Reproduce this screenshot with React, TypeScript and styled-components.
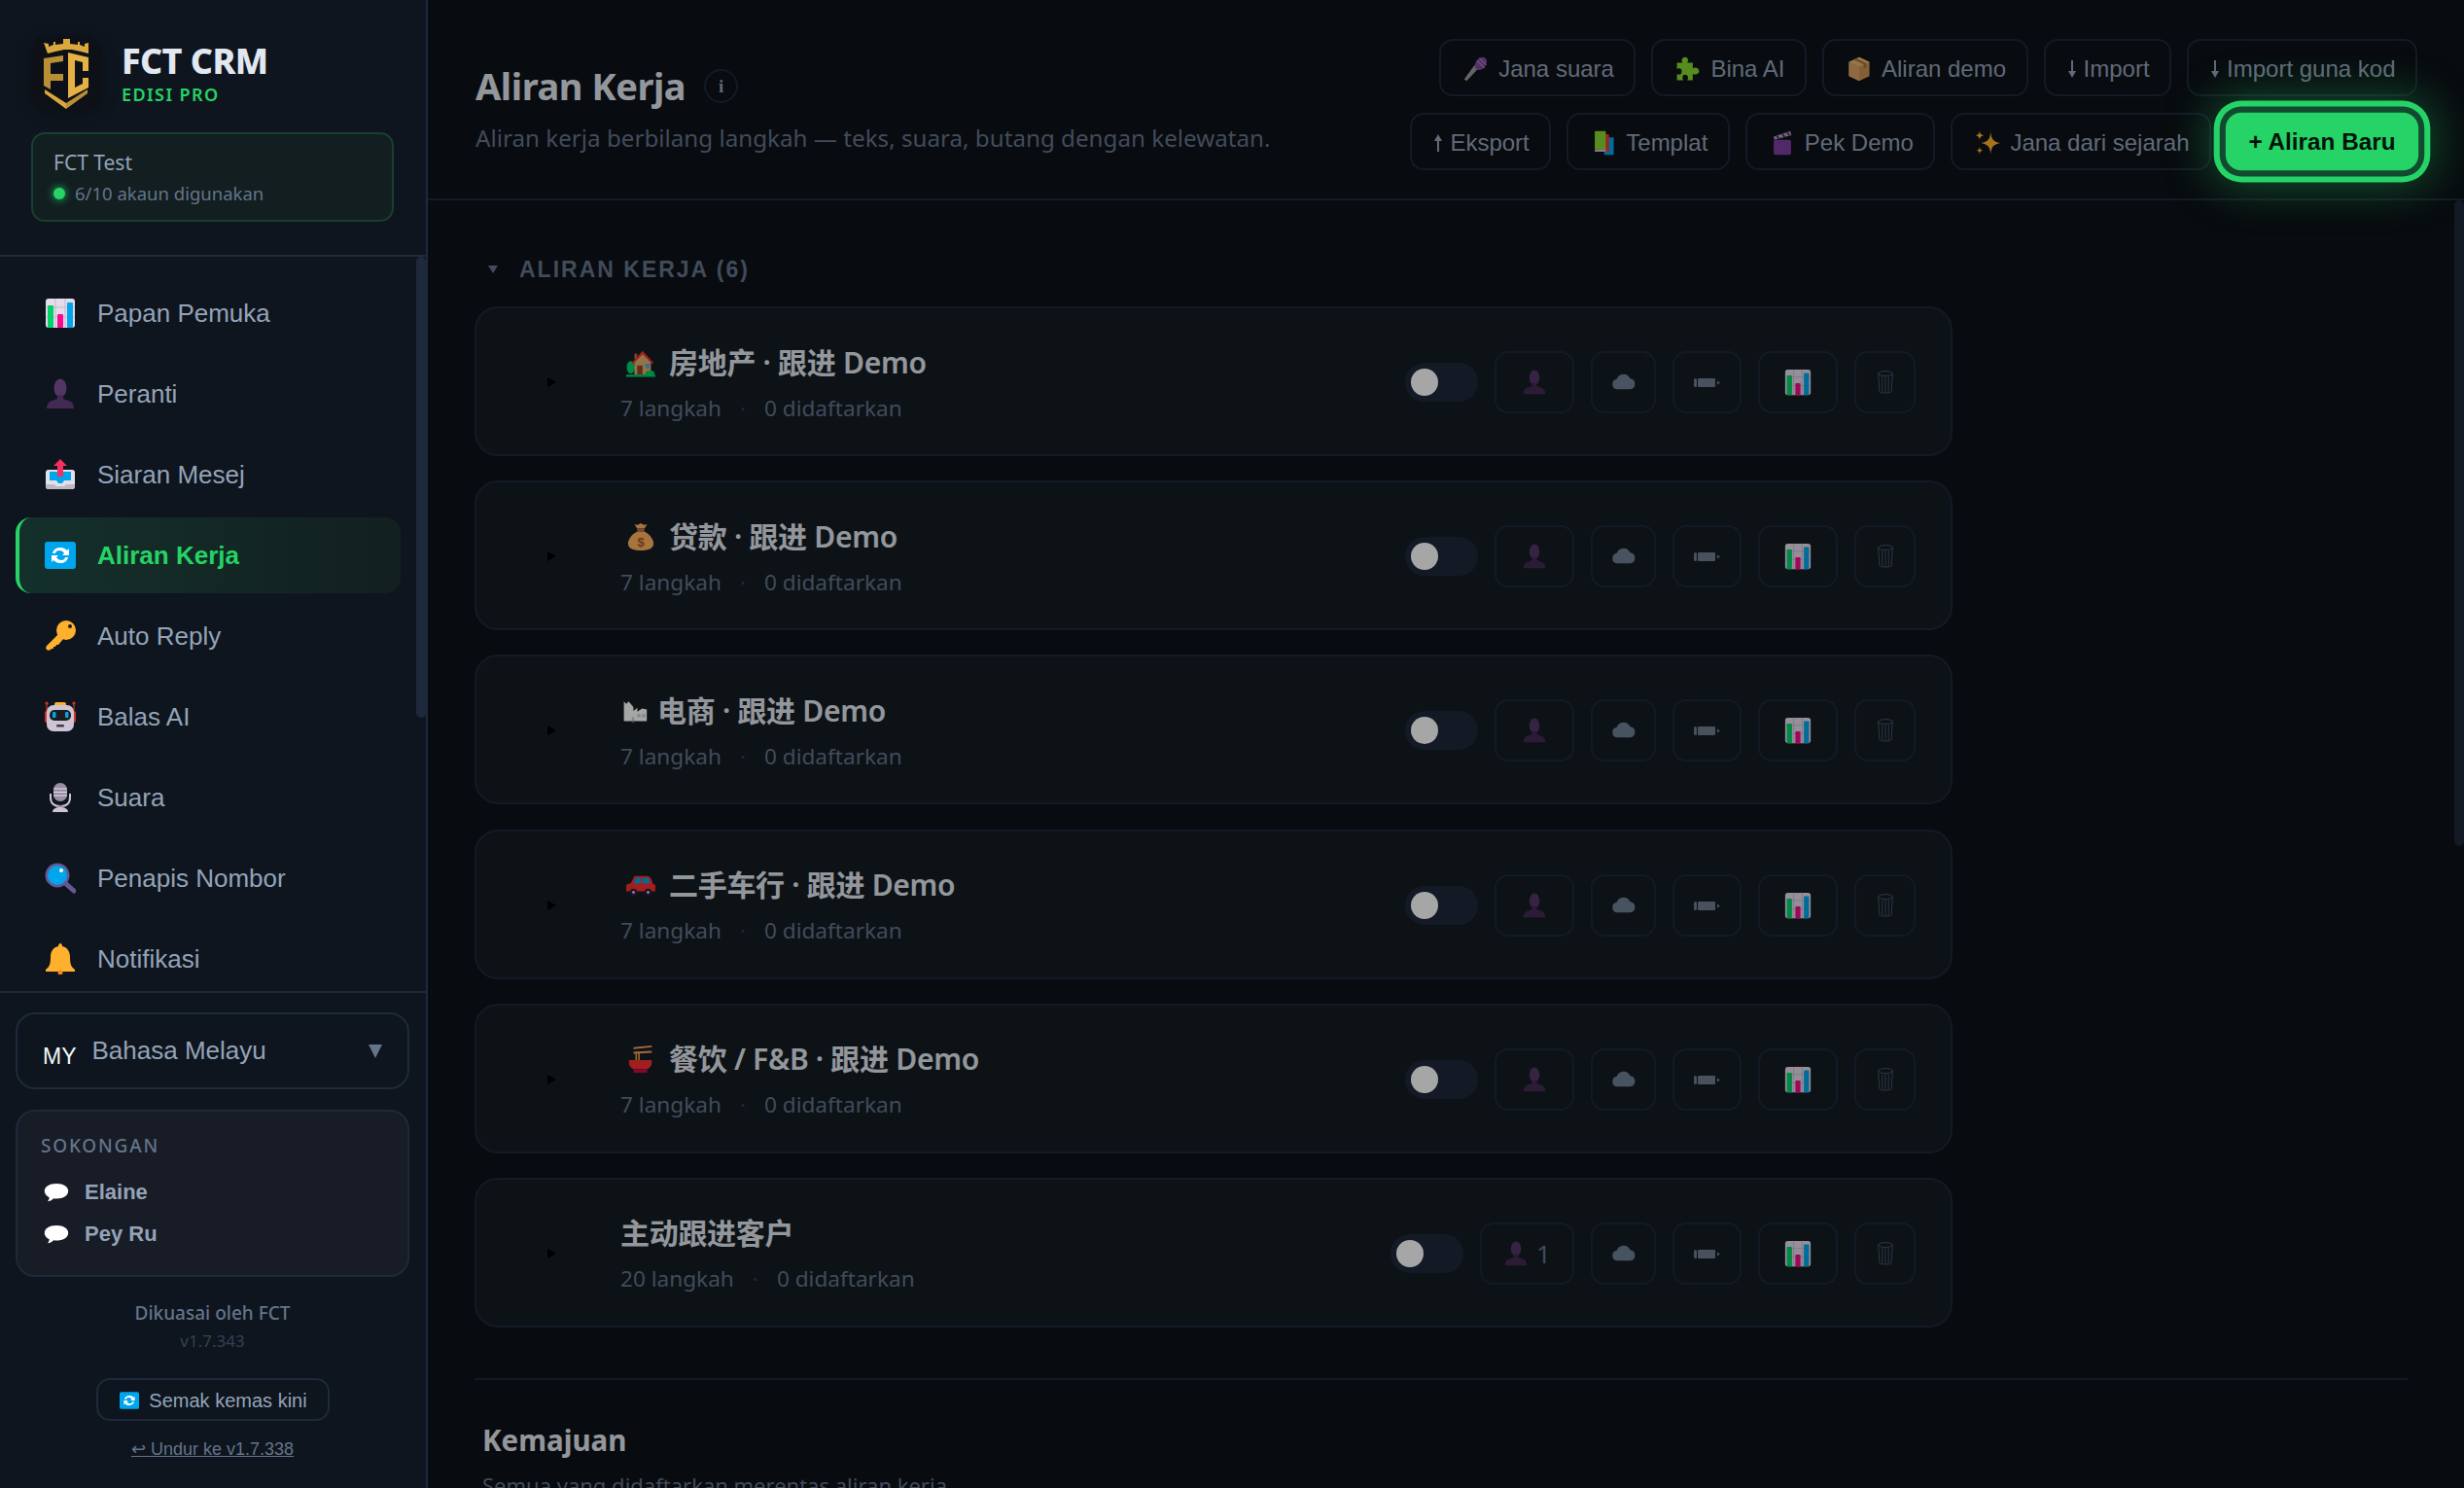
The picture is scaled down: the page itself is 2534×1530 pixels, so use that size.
import React from 'react';
import styled, { createGlobalStyle } from 'styled-components';

const SEGOE = `"Noto Sans", "Noto Sans CJK SC", sans-serif`;
const ARIAL = `"Liberation Sans", "Noto Sans CJK SC", sans-serif`;

const Global = createGlobalStyle`
  html, body { margin: 0; padding: 0; height: 100%; background: #0d1117; overflow: hidden; }
  * { box-sizing: border-box; }
`;

type EmojiName = 'chart' | 'person' | 'outbox' | 'refresh' | 'key' | 'robot' | 'mic' | 'search' | 'bell' | 'bubble'
  | 'handmic' | 'puzzle' | 'box' | 'books' | 'clapper' | 'sparkles' | 'house' | 'bag' | 'factory' | 'car' | 'noodles'
  | 'cloud' | 'pen' | 'trash';

const Art: Record<EmojiName, React.ReactNode> = {
  chart: <>
    <rect x="1" y="1" width="30" height="30" rx="3" fill="#e4dcea" />
    <path d="M11 1v30M21 1v30M1 10h30M1 20h30" stroke="#c3b8cf" strokeWidth="1" />
    <rect x="3" y="8" width="6" height="23" rx="1" fill="#00d26a" />
    <rect x="13" y="17" width="6" height="14" rx="1" fill="#f70a8d" />
    <rect x="23" y="5" width="6" height="26" rx="1" fill="#00a6ed" />
  </>,
  person: <>
    <ellipse cx="16" cy="10" rx="6.500" ry="9.500" fill="#533566" />
    <path d="M13 17h6v4l7 2.500c2 1 4 4 4 7.500H2c0-3.500 2-6.500 4-7.500l7-2.500z" fill="#432a52" />
  </>,
  outbox: <>
    <path d="M4 11h24a3 3 0 0 1 3 3v14a3 3 0 0 1-3 3H4a3 3 0 0 1-3-3V14a3 3 0 0 1 3-3z" fill="#e4e0ea" />
    <path d="M5 13h22v9h-7l-2 3h-4l-2-3H5z" fill="#00a6ed" />
    <path d="M1 26h9l2 2h8l2-2h9v2a3 3 0 0 1-3 3H4a3 3 0 0 1-3-3z" fill="#bdb8c4" />
    <path d="M16 0l7 7h-4v11h-6V7H9z" fill="#f92f60" />
  </>,
  refresh: <>
    <rect x="0" y="2" width="32" height="28" rx="3" fill="#00a6ed" />
    <path d="M8 14c1-4 4-6 8-6 3 0 5 1 7 3l2-2v7h-7l2-2c-1-2-3-3-5-3-2 0-4 1-4 3z" fill="#fff" />
    <path d="M24 18c-1 4-4 6-8 6-3 0-5-1-7-3l-2 2v-7h7l-2 2c1 2 3 3 5 3 2 0 4-1 4-3z" fill="#fff" />
  </>,
  key: <>
    <path d="M15 13L2 26c-1 1-1 3 0 4s3 1 4 0l1-1 2 0 0-2 2 0 1-2 2 0 5-6z" fill="#ffb02e" />
    <circle cx="22" cy="10" r="10" fill="#ffb02e" />
    <circle cx="26" cy="6" r="2" fill="#1c1c1c" />
  </>,
  robot: <>
    <rect x="0" y="10" width="32" height="12" rx="2" fill="#d0342c" />
    <circle cx="2" cy="2" r="1.600" fill="#d0342c" /><circle cx="30" cy="2" r="1.600" fill="#d0342c" />
    <path d="M2 2v8M30 2v8" stroke="#d0342c" strokeWidth="1.200" />
    <rect x="10" y="1" width="12" height="5" rx="2" fill="#ffb02e" />
    <rect x="2" y="4" width="28" height="27" rx="7" fill="#cdc4d6" />
    <rect x="5" y="9" width="22" height="11" rx="5" fill="#1c1c1c" />
    <rect x="8" y="11" width="3.500" height="6" rx="1" fill="#00a6ed" /><rect x="21" y="11" width="3.500" height="6" rx="1" fill="#00a6ed" />
    <rect x="12" y="24" width="8" height="2.500" rx="1" fill="#433b4b" />
  </>,
  mic: <>
    <rect x="9" y="1" width="14" height="19" rx="7" fill="#998ea4" />
    <path d="M9 7h14M9 10.500h14M9 14h14" stroke="#e4dfe9" strokeWidth="1.200" />
    <path d="M6 12v4c0 6 4 9 10 9s10-3 10-9v-4" fill="none" stroke="#cdc4d6" strokeWidth="2" />
    <path d="M14 24h4v2h-4z" fill="#998ea4" />
    <path d="M8 31c0-3 3-5 8-5s8 2 8 5z" fill="#cdc4d6" />
  </>,
  search: <>
    <path d="M21 21l9 8" stroke="#635994" strokeWidth="5" strokeLinecap="round" />
    <circle cx="13" cy="13" r="12.500" fill="#635994" />
    <circle cx="13" cy="13" r="10" fill="#00a6ed" />
    <circle cx="17" cy="8" r="2" fill="#fff" />
  </>,
  bell: <>
    <path d="M16 0c1 0 2 1 2 3 5 1 8 5 8 11 0 7 1 10 5 13v2H1v-2c4-3 5-6 5-13 0-6 3-10 8-11 0-2 1-3 2-3z" fill="#ffb02e" />
    <circle cx="16" cy="30" r="2.500" fill="#f8841c" />
  </>,
  bubble: <>
    <path d="M16 5C7 5 1 9 1 14.500c0 3.500 2.500 6.500 6 8-.2 2-1 4-2 5 3 0 6-2 7.500-3.700 1 .2 2.300.2 3.500.2 9 0 15-4 15-9.500S25 5 16 5z" fill="#fff" />
  </>,
  handmic: <>
    <path d="M4 31l-3-2 13-18 5 4z" fill="#9b9b9b" />
    <ellipse cx="22" cy="9" rx="6.500" ry="9" transform="rotate(40 22 9)" fill="#7d4f9e" />
    <path d="M17 5l10 10M20 2l9 9" stroke="#b99fce" strokeWidth="1.200" />
  </>,
  puzzle: <>
    <path d="M12 1c3 0 4 2 4 4 0 1-.5 2-1 3h7v7c1-.5 2-1 3-1 3 0 5 2 5 4.500S28 23 25 23c-1 0-2-.5-3-1v8h-7c.5-1 1-2 1-3 0-3-2-4-4-4s-3 1-3 4c0 1 .5 2 1 3H2v-8c1 .5 2 1 3 1 2 0 3-2 3-4s-1-4-3-4c-1 0-2 .5-3 1V8h7c-.5-1-1-2-1-3 0-2 2-4 4-4z" fill="#86d72f" />
  </>,
  box: <>
    <path d="M16 1l13 6v18l-13 6-13-6V7z" fill="#ca9352" />
    <path d="M16 1l13 6-13 6-13-6z" fill="#e8b475" />
    <path d="M16 13v18L3 25V7z" fill="#d9a468" />
    <path d="M9 4l13 6v5l3-1.500V8.500L12 2.500z" fill="#a5703a" />
  </>,
  books: <>
    <rect x="17" y="9" width="12" height="22" fill="#00a6ed" />
    <rect x="11" y="5" width="12" height="22" fill="#f8312f" />
    <rect x="5" y="1" width="14" height="23" rx="1" fill="#86d72f" />
    <rect x="5" y="24" width="14" height="3" fill="#cdc4d6" />
  </>,
  clapper: <>
    <rect x="5" y="12" width="22" height="19" rx="2" fill="#7f3fa0" />
    <path d="M5 8L26 1l1.500 5L6 12z" fill="#a99cc0" />
    <path d="M9 7l3 4M16 4.500l3 4M22 2.500l3 4" stroke="#3a2b4d" strokeWidth="2" />
  </>,
  sparkles: <>
    <path d="M20 2c1 9 3 12 12 14-9 2-11 5-12 14-1-9-3-12-12-14 9-2 11-5 12-14z" fill="#ffb02e" />
    <path d="M6 1c.5 3.500 1.500 4.500 5 5.500-3.500 1-4.500 2-5 5.500-.5-3.500-1.500-4.500-5-5.500 3.500-1 4.500-2 5-5.500z" fill="#ffb02e" />
    <path d="M6 21c.4 3 1.200 4 4 4.500-2.800.5-3.600 1.500-4 4.500-.4-3-1.200-4-4-4.500 2.800-.5 3.600-1.500 4-4.500z" fill="#ffb02e" />
  </>,
  house: <>
    <ellipse cx="5" cy="21" rx="4.500" ry="7" fill="#00d26a" />
    <path d="M9 6h3v6H9z" fill="#c66a3a" />
    <path d="M9 15l9-9 9 9v14H9z" fill="#e6b06d" />
    <path d="M18 3L6 16l1.600 1.200L18 6.500 28.400 17.200 30 16z" fill="#f8312f" />
    <rect x="12" y="19" width="6" height="10" fill="#8c4a2f" />
    <rect x="21" y="17" width="4.500" height="5" fill="#5ba7d9" />
    <ellipse cx="26" cy="27.500" rx="5" ry="3" fill="#00d26a" />
    <rect x="0" y="29" width="32" height="2.500" fill="#00d26a" />
  </>,
  bag: <>
    <path d="M12 7L9 2l3.500 1L16 1l3.500 2L23 2l-3 5z" fill="#ffb25c" />
    <path d="M12 7h8v3h-8z" fill="#c96a3b" />
    <path d="M12 10h8c6 3 10 9 10 13 0 6-5 8-14 8S2 29 2 23c0-4 4-10 10-13z" fill="#ffb25c" />
    <text x="16" y="27" fontSize="14" fontFamily="Liberation Sans" fontWeight="700" textAnchor="middle" fill="#a6542b">$</text>
  </>,
  factory: <>
    <path d="M2 4l3 3 3-3 6 7v5l5-4v5l6-4 6 1v15H2z" fill="#fff" />
    <path d="M19 20h4v4h-4zM25 20h4v4h-4zM12 24h3v7h-3z" fill="#9a9da3" opacity=".5" />
  </>,
  car: <>
    <path d="M5 14l4-8h14c3 0 5 3 6 8l3 2v7H0v-6c0-2 3-3 5-3z" fill="#f8312f" />
    <path d="M11 8h5v6H8zM18 8h5c1.500 0 3 3 3 6h-8z" fill="#00a6ed" />
    <circle cx="8" cy="24" r="4" fill="#321b41" /><circle cx="8" cy="24" r="1.500" fill="#d3d3d3" />
    <circle cx="24" cy="24" r="4" fill="#321b41" /><circle cx="24" cy="24" r="1.500" fill="#d3d3d3" />
  </>,
  noodles: <>
    <path d="M11 8v10M14 8v10" stroke="#d9a03a" strokeWidth="1.800" />
    <path d="M8 3l20-2v2L8 5zM8 8l20-1v2L8 10z" fill="#ff9e6b" />
    <path d="M3 17h25v3c0 4-3 6-5 7H8c-2-1-5-3-5-7z" fill="#f8312f" />
    <rect x="8" y="27" width="15" height="4" fill="#ca0b4a" />
  </>,
  cloud: <path d="M8 25a6.500 6.500 0 0 1-1-12.900A9 9 0 0 1 24 11.500 6.800 6.800 0 0 1 24 25z" fill="#6f8097" />,
  pen: <>
    <rect x="2" y="12" width="3" height="9" rx="1.500" fill="#6f7d90" />
    <rect x="6" y="12" width="18" height="9" rx="1" fill="#6f7d90" />
    <path d="M26 14.500l3 2-3 2z" fill="#6f7d90" />
  </>,
  trash: <>
    <ellipse cx="16" cy="5" rx="9" ry="3" fill="none" stroke="#475569" strokeWidth="1.200" />
    <path d="M7 5l1.500 23c0 2 15 2 15 0L25 5M12 9v19M16 9v20M20 9v19" fill="none" stroke="#475569" strokeWidth="1.200" />
  </>,
};

const Emoji = ({ name, size = 32 }: { name: EmojiName; size?: number }) => (
  <svg width={size} height={size} viewBox="0 0 32 32" style={{ flex: 'none', display: 'block' }}>{Art[name]}</svg>
);

const Shell = styled.div`
  display: flex;
  width: 2534px;
  height: 1530px;
  overflow: hidden;
  background: #0d1117;
`;

const Sidebar = styled.aside`
  position: relative;
  width: 440px;
  flex: none;
  display: flex;
  flex-direction: column;
  background: #0e151e;
  border-right: 2px solid #1e293b;
`;

const SideHead = styled.div`
  height: 264px;
  flex: none;
  padding: 37px 33px 0 32px;
  border-bottom: 2px solid #1e293b;
`;

const BrandRow = styled.div`
  display: flex;
  align-items: center;
  gap: 21px;
`;

const LogoBox = styled.div`
  width: 72px;
  height: 75px;
  flex: none;
  border-radius: 16px;
  background: #0d1117;
  box-shadow: 0 4px 16px rgba(0, 0, 0, 0.25);
  display: flex;
  align-items: flex-end;
  justify-content: center;
`;

const BrandText = styled.div`
  display: flex;
  flex-direction: column;
  padding-top: 3px;
`;

const BrandName = styled.div`
  font: 800 36px/38px ${SEGOE};
  color: #e2e8f0;
  letter-spacing: -0.6px;
`;

const BrandTier = styled.div`
  margin-top: 3px;
  font: 600 18px/24px ${SEGOE};
  color: #25d366;
  letter-spacing: 1.4px;
`;

const LicenseCard = styled.div`
  margin-top: 24px;
  height: 92px;
  border: 2px solid #17402e;
  border-radius: 14px;
  background: #121e20;
  padding: 15px 21px;
  display: flex;
  flex-direction: column;
  gap: 5px;
`;

const LicenseName = styled.div`
  font: 400 21px/28px ${SEGOE};
  color: #94a3b8;
`;

const LicenseMeta = styled.div`
  display: flex;
  align-items: center;
  gap: 10px;
  font: 400 18.500px/26px ${SEGOE};
  color: #64748b;
`;

const StatusDot = styled.span`
  width: 12px;
  height: 12px;
  border-radius: 50%;
  background: #25d366;
  box-shadow: 0 0 8px #25d366;
`;

const NavList = styled.nav`
  flex: 1;
  min-height: 0;
  overflow: hidden;
  padding: 19px 26px 0 16px;
  display: flex;
  flex-direction: column;
  gap: 5px;
`;

const NavItem = styled.div<{ $active?: boolean }>`
  height: 78px;
  flex: none;
  display: flex;
  align-items: center;
  gap: 22px;
  padding-left: 26px;
  border-left: 4px solid ${p => (p.$active ? '#25d366' : 'transparent')};
  border-radius: 16px;
  background: ${p => (p.$active ? 'linear-gradient(90deg, #14302a, #12201f)' : 'transparent')};
  font: ${p => (p.$active ? 700 : 400)} 26px/32px ${ARIAL};
  color: ${p => (p.$active ? '#25d366' : '#94a3b8')};
`;

const SideThumb = styled.div`
  position: absolute;
  top: 264px;
  right: 0;
  width: 10px;
  height: 474px;
  border-radius: 5px;
  background: #1e293b;
`;

const SideFoot = styled.div`
  flex: none;
  height: 511px;
  border-top: 2px solid #1e293b;
  padding: 20px 17px 0 16px;
  display: flex;
  flex-direction: column;
`;

const LangSelect = styled.div`
  height: 79px;
  flex: none;
  border: 2px solid #1e293b;
  border-radius: 20px;
  display: flex;
  align-items: center;
  padding: 0 26px 0 26px;
  gap: 16px;
  font: 400 26px/32px ${ARIAL};
  color: #94a3b8;
`;

const LangCode = styled.span`
  font: 400 23px/26px ${ARIAL};
  color: #f1f5f9;
  margin-top: 10px;
`;

const LangName = styled.span`
  flex: 1;
  margin-bottom: 2px;
`;

const DownTriangle = styled.span<{ $w: number; $h: number; $c: string }>`
  width: 0;
  height: 0;
  flex: none;
  border-left: ${p => p.$w / 2}px solid transparent;
  border-right: ${p => p.$w / 2}px solid transparent;
  border-top: ${p => p.$h}px solid ${p => p.$c};
`;

const SupportCard = styled.div`
  margin-top: 21px;
  height: 172px;
  flex: none;
  border: 2px solid #1e293b;
  border-radius: 20px;
  background: #181c26;
  padding: 22px 24px 0;
`;

const SupportTitle = styled.div`
  font: 500 19px/26px ${SEGOE};
  color: #64748b;
  letter-spacing: 1.800px;
  margin-bottom: 13px;
`;

const SupportRow = styled.div`
  height: 43px;
  display: flex;
  align-items: center;
  gap: 16px;
  padding-left: 3px;
  font: 700 22px/28px ${ARIAL};
  color: #94a3b8;
`;

const PoweredBy = styled.div`
  margin-top: 23px;
  text-align: center;
  font: 500 19px/28px ${SEGOE};
  color: #64748b;
`;

const Version = styled.div`
  text-align: center;
  font: 400 17px/30px ${SEGOE};
  color: #334155;
`;

const CheckButton = styled.div`
  align-self: center;
  margin-top: 23px;
  width: 240px;
  height: 44px;
  flex: none;
  padding: 2px 0 0 2px;
  border: 2px solid #1e293b;
  border-radius: 14px;
  display: flex;
  align-items: center;
  justify-content: center;
  gap: 10px;
  font: 400 20px/26px ${ARIAL};
  color: #94a3b8;
`;

const RollbackLink = styled.a`
  align-self: center;
  margin-top: 17px;
  font: 400 18px/24px ${ARIAL};
  color: #64748b;
  text-decoration: underline;
`;

const Main = styled.main`
  position: relative;
  flex: 1;
  min-width: 0;
  display: flex;
  flex-direction: column;
  background: #0d1117;
`;

const Dimmer = styled.div`
  position: absolute;
  inset: 0;
  z-index: 5;
  background: rgba(0, 0, 0, 0.35);
`;

const Header = styled.header`
  height: 206px;
  flex: none;
  display: flex;
  justify-content: space-between;
  padding: 40px 48px 0 49px;
  border-bottom: 2px solid #1e293b;
`;

const TitleBlock = styled.div`
  padding-top: 23px;
`;

const TitleRow = styled.div`
  display: flex;
  align-items: center;
  gap: 19px;
`;

const PageTitle = styled.h1`
  margin: 0;
  font: 700 38px/50px ${SEGOE};
  color: #e2e8f0;
  letter-spacing: -0.45px;
`;

const InfoMark = styled.span`
  width: 35px;
  height: 35px;
  border: 2px solid #1e293b;
  border-radius: 50%;
  display: flex;
  align-items: center;
  justify-content: center;
  font: 700 19px/1 "Liberation Serif", serif;
  color: #94a3b8;
`;

const PageSub = styled.p`
  margin: 12px 0 0;
  font: 400 24.200px/34px ${SEGOE};
  color: #64748b;
`;

const Actions = styled.div`
  width: 1060px;
  display: flex;
  flex-wrap: wrap;
  justify-content: flex-end;
  align-content: flex-start;
  gap: 17px 16px;
`;

const ActionButton = styled.div`
  height: 59px;
  padding: 2px 20.500px 0 23px;
  border: 2px solid #1e293b;
  border-radius: 14px;
  display: flex;
  align-items: center;
  gap: 10px;
  font: 400 24px/30px ${ARIAL};
  color: #94a3b8;
  white-space: nowrap;
`;

const PrimaryButton = styled.div`
  position: relative;
  z-index: 6;
  height: 59px;
  width: 196px;
  border-radius: 16px;
  background: #25d366;
  display: flex;
  align-items: center;
  justify-content: center;
  font: 700 24px/30px ${ARIAL};
  color: #04130a;
  transform: scale(1.012);
  box-shadow: 0 0 0 6px #124a30, 0 0 0 12px #25d366, 0 0 46px 16px rgba(37, 211, 102, 0.35);
`;

const Arrow = styled.span<{ $up?: boolean }>`
  position: relative;
  width: 8px;
  height: 18px;
  flex: none;
  margin-right: -2px;
  &::before {
    content: '';
    position: absolute;
    left: 3px;
    width: 2px;
    height: 14px;
    background: #94a3b8;
    ${p => (p.$up ? 'bottom: 0;' : 'top: 0;')}
  }
  &::after {
    content: '';
    position: absolute;
    left: 0;
    border-left: 4px solid transparent;
    border-right: 4px solid transparent;
    ${p => (p.$up ? 'top: 0; border-bottom: 7px solid #94a3b8;' : 'bottom: 0; border-top: 7px solid #94a3b8;')}
  }
`;

const Content = styled.div`
  position: relative;
  flex: 1;
  min-height: 0;
  overflow: hidden;
  padding: 51px 58px 0 48px;
`;

const MainThumb = styled.div`
  position: absolute;
  top: 0;
  right: 0;
  width: 10px;
  height: 664px;
  border-radius: 5px;
  background: #1e293b;
`;

const SectionHead = styled.div`
  height: 40px;
  display: flex;
  align-items: center;
  gap: 22px;
  padding-left: 14px;
  font: 700 23px/30px ${ARIAL};
  letter-spacing: 2px;
  color: #64748b;
`;

const FlowList = styled.div`
  margin-top: 18px;
  width: 1520px;
  display: flex;
  flex-direction: column;
  gap: 25.200px;
`;

const FlowCard = styled.div`
  height: 154px;
  border: 2px solid #1e293b;
  border-radius: 24px;
  background: #141c24;
  display: flex;
  align-items: center;
  padding: 2px 36px 0 73px;
`;

const Caret = styled.span`
  width: 0;
  height: 0;
  flex: none;
  border-top: 5px solid transparent;
  border-bottom: 5px solid transparent;
  border-left: 9px solid #000;
  margin-right: 66px;
`;

const FlowInfo = styled.div`
  flex: 1;
  min-width: 0;
  padding-top: 2px;
`;

const FlowTitle = styled.div<{ $tight?: boolean }>`
  display: flex;
  align-items: center;
  gap: ${p => (p.$tight ? 10 : 14)}px;
  font: 600 30px/40px ${SEGOE};
  letter-spacing: -0.3px;
  color: #e2e8f0;
`;

const EmojiSlot = styled.span<{ $tight?: boolean }>`
  margin-left: ${p => (p.$tight ? 2 : 6)}px;
`;

const FlowMeta = styled.div`
  display: flex;
  align-items: center;
  gap: 12px;
  margin-top: 11px;
  font: 400 22.600px/32px ${SEGOE};
  color: #64748b;
`;

const MetaDot = styled.span`
  margin: 0 7px;
  color: #334155;
`;

const Toggle = styled.div`
  width: 75px;
  height: 40px;
  flex: none;
  border-radius: 20px;
  background: #1e293b;
  padding: 6px;
  margin-right: 17px;
`;

const Knob = styled.div`
  width: 28px;
  height: 28px;
  border-radius: 50%;
  background: #fff;
`;

const FlowTools = styled.div`
  display: flex;
  gap: 17px;
  flex: none;
`;

const ToolButton = styled.div<{ $w: number }>`
  width: ${p => p.$w}px;
  height: 64px;
  border: 2px solid #1e293b;
  border-radius: 14px;
  display: flex;
  align-items: center;
  justify-content: center;
  gap: 8px;
  font: 400 26px/30px ${SEGOE};
  color: #64748b;
`;

const Separator = styled.hr`
  margin: 52px 0 0;
  border: 0;
  height: 2px;
  background: #1e293b;
`;

const ProgressTitle = styled.h2`
  margin: 42px 0 0 8px;
  font: 700 29.500px/40px ${SEGOE};
  color: #e2e8f0;
`;

const ProgressSub = styled.p`
  margin: 11px 0 0 8px;
  font: 400 22px/30px ${SEGOE};
  color: #64748b;
`;

const nav: { icon: EmojiName; label: string; active?: boolean }[] = [
  { icon: 'chart', label: 'Papan Pemuka' },
  { icon: 'person', label: 'Peranti' },
  { icon: 'outbox', label: 'Siaran Mesej' },
  { icon: 'refresh', label: 'Aliran Kerja', active: true },
  { icon: 'key', label: 'Auto Reply' },
  { icon: 'robot', label: 'Balas AI' },
  { icon: 'mic', label: 'Suara' },
  { icon: 'search', label: 'Penapis Nombor' },
  { icon: 'bell', label: 'Notifikasi' },
];

const flows: { icon?: EmojiName; title: string; steps: number; count?: string }[] = [
  { icon: 'house', title: '房地产 · 跟进 Demo', steps: 7 },
  { icon: 'bag', title: '贷款 · 跟进 Demo', steps: 7 },
  { icon: 'factory', title: '电商 · 跟进 Demo', steps: 7 },
  { icon: 'car', title: '二手车行 · 跟进 Demo', steps: 7 },
  { icon: 'noodles', title: '餐饮 / F&B · 跟进 Demo', steps: 7 },
  { title: '主动跟进客户', steps: 20, count: '1' },
];

const Logo = () => (
  <svg width="46" height="72" viewBox="0 0 46 72">
    <path d="M0 4l5 1v3l5-2V3h2v3l8-1V0h7v5l8 1V3h2v3l5 2V5l4-1v11l-8-2-9-2h-8l-9 2-8 2z" fill="#dba83d" />
    <path d="M0 20l20-3v6L7 25v11h13v7H7v9l-7-4z" fill="#b98f36" />
    <path d="M25 14l21 5v14h-6v-9l-8-2v28l8-4v-6h6v10L25 61z" fill="#e5b144" />
    <path d="M1 52l22 14v6L1 56z" fill="#dba83d" />
    <path d="M45 52L23 66v6l22-16z" fill="#b98f36" />
  </svg>
);

export default function App() {
  return (
    <Shell>
      <Global />
      <Sidebar>
        <SideHead>
          <BrandRow>
            <LogoBox><Logo /></LogoBox>
            <BrandText>
              <BrandName>FCT CRM</BrandName>
              <BrandTier>EDISI PRO</BrandTier>
            </BrandText>
          </BrandRow>
          <LicenseCard>
            <LicenseName>FCT Test</LicenseName>
            <LicenseMeta><StatusDot />6/10 akaun digunakan</LicenseMeta>
          </LicenseCard>
        </SideHead>
        <NavList>
          {nav.map(n => (
            <NavItem key={n.label} $active={n.active}>
              <Emoji name={n.icon} />
              {n.label}
            </NavItem>
          ))}
        </NavList>
        <SideThumb />
        <SideFoot>
          <LangSelect>
            <LangCode>MY</LangCode>
            <LangName>Bahasa Melayu</LangName>
            <DownTriangle $w={14} $h={14} $c="#64748b" />
          </LangSelect>
          <SupportCard>
            <SupportTitle>SOKONGAN</SupportTitle>
            <SupportRow><Emoji name="bubble" size={26} />Elaine</SupportRow>
            <SupportRow><Emoji name="bubble" size={26} />Pey Ru</SupportRow>
          </SupportCard>
          <PoweredBy>Dikuasai oleh FCT</PoweredBy>
          <Version>v1.7.343</Version>
          <CheckButton><Emoji name="refresh" size={20} />Semak kemas kini</CheckButton>
          <RollbackLink>↩ Undur ke v1.7.338</RollbackLink>
        </SideFoot>
      </Sidebar>
      <Main>
        <Header>
          <TitleBlock>
            <TitleRow>
              <PageTitle>Aliran Kerja</PageTitle>
              <InfoMark>i</InfoMark>
            </TitleRow>
            <PageSub>Aliran kerja berbilang langkah — teks, suara, butang dengan kelewatan.</PageSub>
          </TitleBlock>
          <Actions>
            <ActionButton><Emoji name="handmic" size={26} />Jana suara</ActionButton>
            <ActionButton><Emoji name="puzzle" size={26} />Bina AI</ActionButton>
            <ActionButton><Emoji name="box" size={26} />Aliran demo</ActionButton>
            <ActionButton><Arrow />Import</ActionButton>
            <ActionButton><Arrow />Import guna kod</ActionButton>
            <ActionButton><Arrow $up />Eksport</ActionButton>
            <ActionButton><Emoji name="books" size={26} />Templat</ActionButton>
            <ActionButton><Emoji name="clapper" size={26} />Pek Demo</ActionButton>
            <ActionButton><Emoji name="sparkles" size={26} />Jana dari sejarah</ActionButton>
            <PrimaryButton>+ Aliran Baru</PrimaryButton>
          </Actions>
        </Header>
        <Content>
          <SectionHead>
            <DownTriangle $w={10} $h={8} $c="#64748b" />
            ALIRAN KERJA (6)
          </SectionHead>
          <FlowList>
            {flows.map(f => (
              <FlowCard key={f.title}>
                <Caret />
                <FlowInfo>
                  <FlowTitle $tight={f.icon === 'factory'}>
                    {f.icon && (
                      <EmojiSlot $tight={f.icon === 'factory'}>
                        <Emoji name={f.icon} size={f.icon === 'factory' ? 26 : 30} />
                      </EmojiSlot>
                    )}
                    {f.title}
                  </FlowTitle>
                  <FlowMeta>{f.steps} langkah<MetaDot>·</MetaDot>0 didaftarkan</FlowMeta>
                </FlowInfo>
                <Toggle><Knob /></Toggle>
                <FlowTools>
                  <ToolButton $w={f.count ? 97 : 82}><Emoji name="person" size={26} />{f.count}</ToolButton>
                  <ToolButton $w={67}><Emoji name="cloud" size={26} /></ToolButton>
                  <ToolButton $w={71}><Emoji name="pen" size={32} /></ToolButton>
                  <ToolButton $w={82}><Emoji name="chart" size={28} /></ToolButton>
                  <ToolButton $w={63}><Emoji name="trash" size={26} /></ToolButton>
                </FlowTools>
              </FlowCard>
            ))}
          </FlowList>
          <Separator />
          <ProgressTitle>Kemajuan</ProgressTitle>
          <ProgressSub>Semua yang didaftarkan merentas aliran kerja.</ProgressSub>
          <MainThumb />
        </Content>
        <Dimmer />
      </Main>
    </Shell>
  );
}
